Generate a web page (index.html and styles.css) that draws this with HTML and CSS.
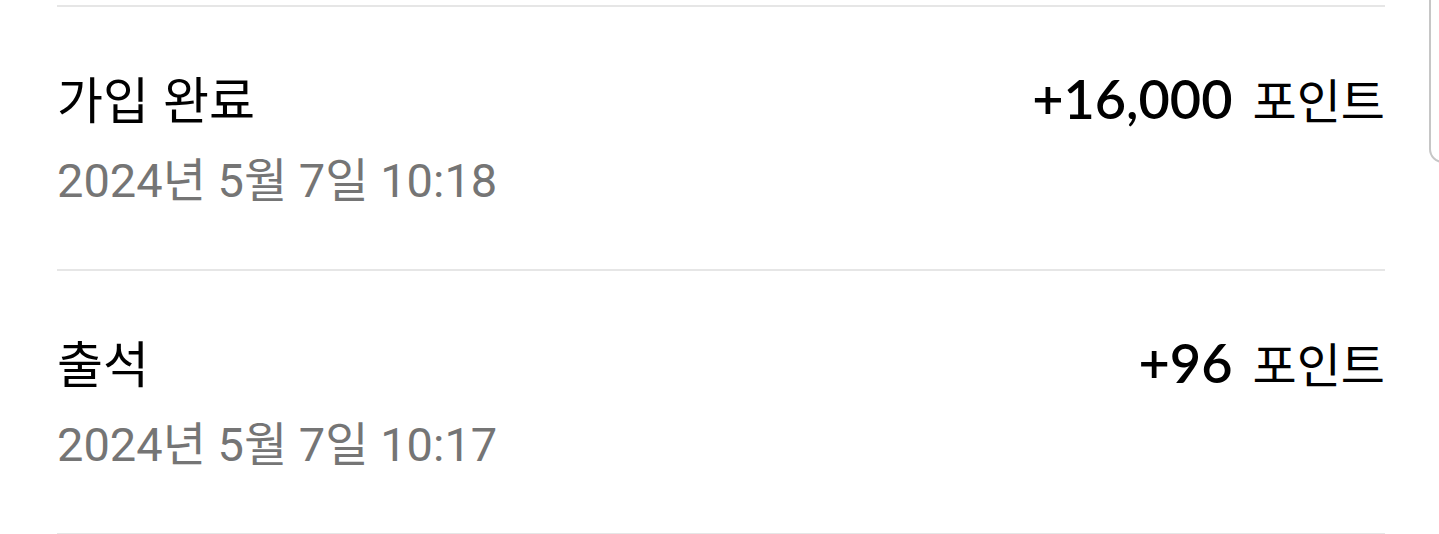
FILE: index.html
```html
<!DOCTYPE html>
<html lang="ko">
<head>
<meta charset="utf-8">
<title>포인트 내역</title>
<link rel="stylesheet" href="styles.css">
</head>
<body>
<div class="page">
  <ul class="history">
    <li class="entry">
      <div class="entry-main">
        <span class="entry-title">가입 완료</span>
        <span class="entry-amount"><span class="amount-num">+16,000</span><span class="amount-unit">포인트</span></span>
      </div>
      <div class="entry-date">2024년 5월 7일 10:18</div>
    </li>
    <li class="entry">
      <div class="entry-main">
        <span class="entry-title">출석</span>
        <span class="entry-amount"><span class="amount-num">+96</span><span class="amount-unit">포인트</span></span>
      </div>
      <div class="entry-date">2024년 5월 7일 10:17</div>
    </li>
  </ul>
  <div class="scroll-handle"></div>
</div>
</body>
</html>
```
FILE: styles.css
```css
html, body {
  margin: 0;
  padding: 0;
  background: #ffffff;
}

.page {
  position: relative;
  width: 1439px;
  height: 534px;
  overflow: hidden;
  padding: 5px 54px 0 57px;
  box-sizing: border-box;
}

.history {
  list-style: none;
  margin: 0;
  padding: 0;
  border-top: 2px solid #e6e6e6;
}

.entry {
  display: flex;
  flex-direction: column;
  height: 264px;
  padding-top: 62px;
  box-sizing: border-box;
  border-bottom: 2px solid #e6e6e6;
}

.entry-main {
  display: flex;
  justify-content: space-between;
  align-items: baseline;
  height: 56px;
}

.entry-title {
  font-family: "Noto Sans CJK KR", sans-serif;
  font-size: 50px;
  font-weight: 400;
  line-height: 56px;
  color: #000000;
}

.entry-amount {
  display: flex;
  align-items: baseline;
  gap: 20px;
  font-family: "Noto Sans CJK KR", sans-serif;
  line-height: 56px;
  color: #000000;
  white-space: nowrap;
}

.amount-num {
  font-family: Lato, "Noto Sans CJK KR", sans-serif;
  font-size: 54px;
  font-weight: 600;
}

.amount-unit {
  font-size: 48px;
  font-weight: 400;
}

.entry-date {
  margin-top: 28px;
  font-family: Roboto, "Noto Sans CJK KR", sans-serif;
  font-size: 47px;
  line-height: 56px;
  color: #757575;
}

.scroll-handle {
  position: absolute;
  top: -4px;
  right: -6px;
  width: 16px;
  height: 167px;
  border: 2px solid #c6c6c6;
  border-radius: 0 0 0 14px;
  background: #ffffff;
  box-sizing: border-box;
}
```
